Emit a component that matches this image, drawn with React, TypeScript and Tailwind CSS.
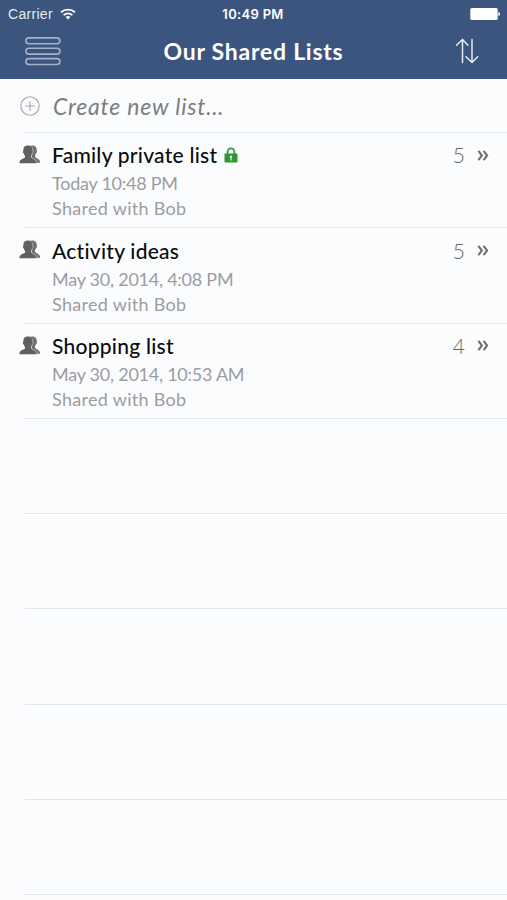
type SharedList = {
  name: string;
  date: string;
  sharedWith: string;
  count: number;
  locked?: boolean;
};

const lists: SharedList[] = [
  { name: "Family private list", date: "Today 10:48 PM", sharedWith: "Bob", count: 5, locked: true },
  { name: "Activity ideas", date: "May 30, 2014, 4:08 PM", sharedWith: "Bob", count: 5 },
  { name: "Shopping list", date: "May 30, 2014, 10:53 AM", sharedWith: "Bob", count: 4 },
];

const emptyRows = [0, 1, 2, 3, 4];

function WifiIcon() {
  return (
    <svg width="16" height="12" viewBox="0 0 16 12" fill="none" stroke="#fff" strokeWidth="1.9">
      <path d="M1 4.3C5 .7 11 .7 15 4.3" />
      <path d="M3.6 7.1C6.2 4.8 9.8 4.8 12.4 7.1" />
      <path d="M8 11.4 5.6 9C7 7.8 9 7.8 10.4 9Z" fill="#fff" stroke="none" />
    </svg>
  );
}

function BatteryIcon() {
  return (
    <svg width="31" height="12" viewBox="0 0 31 12" fill="#fff">
      <rect x="0.3" y="0" width="27.4" height="12" rx="1.5" />
      <path d="M28.4 4c2.2.4 2.2 3.6 0 4Z" />
    </svg>
  );
}

function MenuIcon() {
  return (
    <svg width="36" height="29" viewBox="0 0 36 29" fill="none" stroke="#a3b1c9" strokeWidth="1.6">
      <rect x="0.9" y="0.9" width="34" height="5.9" rx="2.95" />
      <rect x="0.9" y="11.2" width="34" height="5.9" rx="2.95" />
      <rect x="0.9" y="21.6" width="34" height="5.9" rx="2.95" />
    </svg>
  );
}

function SortIcon() {
  return (
    <svg width="24" height="26" viewBox="0 0 24 26" fill="none" stroke="#e4ecf8" strokeWidth="1.5" strokeLinecap="round" strokeLinejoin="round">
      <path d="M7.5 24.5V1.5M1.5 7.2 7.5 1.5 13 7.2" />
      <path d="M17 1.5V24.5M11 18.7 17 24.5 22.7 18.7" />
    </svg>
  );
}

function PlusIcon() {
  return (
    <svg width="20" height="20" viewBox="0 0 20 20" fill="none" stroke="#a5a7a9" strokeWidth="1.1">
      <circle cx="10" cy="10" r="9.2" />
      <path d="M10 5v10M5 10h10" />
    </svg>
  );
}

function PeopleIcon() {
  return (
    <svg className="shrink-0" width="22" height="19" viewBox="0 0 22 19">
      <path
        d="M11.500 .7c4.200-1 6.600 1 6.200 4.900.5.800.2 2-.6 2.500-.2 1-.6 1.700-1.100 2.200-.1 1.500.3 2.200 1.800 2.900 2 .9 3.300 2 3.400 4.600h-8Z"
        fill="#6d6e6d"
      />
      <path
        d="M9 .4c3.700 0 5.100 2.200 4.700 5.300.8.600.5 2.300-.4 2.800-.3 1.300-.7 2-1.200 2.600-.2 1.300.3 1.900 1.700 2.500 2.300 1 3.800 1.600 4.100 4.600H.3c.2-3 1.700-3.600 4.100-4.600 1.500-.6 1.900-1.200 1.700-2.500-.6-.6-1-1.300-1.300-2.600-.9-.5-1.200-2.200-.4-2.800C4 2.600 5.500 .4 9 .4Z"
        fill="#5f605f"
      />
      <path
        d="M12.300 1.500c1.300 1 1.700 2.400 1.500 4.200.7.700.4 2.200-.5 2.800-.2 1.200-.6 1.900-1.100 2.500-.1 1.300.4 1.900 1.700 2.500 2.100 1 3.500 1.600 4 4.300"
        fill="none"
        stroke="#c8cacb"
        strokeWidth="0.8"
      />
    </svg>
  );
}

function LockIcon() {
  return (
    <svg width="14" height="16" viewBox="0 0 14 16">
      <path d="M3.600 7.500V4.700a3.400 3.400 0 0 1 6.800 0V7.500" fill="none" stroke="#359638" strokeWidth="1.7" />
      <rect x="0.5" y="6.600" width="13" height="8.900" rx="0.8" fill="#2f9633" />
      <path d="M7 8.600a1.300 1.300 0 0 0-.6 2.400v2.500h1.200V11A1.300 1.300 0 0 0 7 8.600Z" fill="#e0f1df" />
    </svg>
  );
}

function ChevronsIcon() {
  return (
    <svg width="12" height="11" viewBox="0 0 12 11" fill="none" stroke="#6f7071" strokeWidth="2.1">
      <path d="M1.400 .8 4.900 5.500 1.400 10.200" />
      <path d="M6.600 .8 10.100 5.500 6.600 10.200" />
    </svg>
  );
}

function ListRow({ list }: { list: SharedList }) {
  return (
    <li className="flex h-[95.25px]">
      <div className="w-[25px] shrink-0 pl-[19px] pt-3">
        <PeopleIcon />
      </div>
      <div className="flex flex-1 border-b border-[#e3e6ea] pl-[27px] pr-[18px]">
        <div className="flex-1 whitespace-nowrap pt-[8.4px]">
          <div className="flex items-center gap-[7px] text-[21px] leading-7 text-[#0c0c0c]">
            <h2 className="font-medium tracking-[0.25px]">{list.name}</h2>
            {list.locked && <LockIcon />}
          </div>
          <p className="mt-[2px] text-[18px] leading-[25px] tracking-[-0.25px] text-[#9c9da0]">{list.date}</p>
          <p className="text-[18px] leading-[25px] tracking-[0.3px] text-[#9c9da0]">Shared with {list.sharedWith}</p>
        </div>
        <div className="flex h-7 items-center gap-3 pt-4">
          <span className="text-[21px] font-light text-[#666768]">{list.count}</span>
          <ChevronsIcon />
        </div>
      </div>
    </li>
  );
}

export default function App() {
  return (
    <div className="h-[900px] w-full overflow-hidden bg-[#fbfcfe] font-[Lato,sans-serif]">
      <header className="h-[79px] bg-[#3b557e] text-white">
        <div className="grid h-7 grid-cols-3 items-center pl-2 pr-[9px] font-['Liberation_Sans',sans-serif] text-[14px]">
          <div className="flex items-center gap-[7px] text-[#e3eaf5]">
            <span className="tracking-[0.3px]">Carrier</span>
            <WifiIcon />
          </div>
          <span className="pt-px text-center font-[Inter,sans-serif] text-[13px] font-semibold tracking-[0.3px]">10:49 PM</span>
          <div className="-mr-[3px] flex justify-end">
            <BatteryIcon />
          </div>
        </div>
        <div className="flex h-[46px] items-center justify-between pl-[25px] pr-[28px]">
          <MenuIcon />
          <h1 className="-ml-[9px] text-[23px] font-bold tracking-[0.75px]">Our Shared Lists</h1>
          <SortIcon />
        </div>
      </header>

      <ul>
        <li className="flex h-[54px]">
          <div className="w-[25px] shrink-0 pl-5 pt-[17px]">
            <PlusIcon />
          </div>
          <div className="flex flex-1 items-center border-b border-[#e3e6ea] pl-7 pt-px">
            <span className="text-[23px] italic tracking-[0.8px] text-[#7d7e7f]">Create new list…</span>
          </div>
        </li>
        {lists.map((list) => (
          <ListRow key={list.name} list={list} />
        ))}
        {emptyRows.map((row) => (
          <li key={row} className="ml-[25px] h-[95.25px] border-b border-[#e3e6ea]" />
        ))}
      </ul>
    </div>
  );
}
